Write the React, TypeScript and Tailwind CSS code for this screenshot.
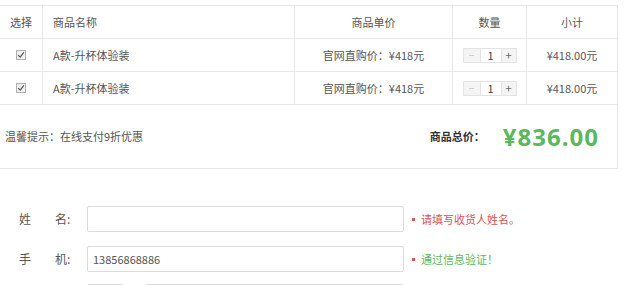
import React from "react";

const font = { fontFamily: '"Noto Sans CJK SC", "Noto Sans", sans-serif' };

const items = [
  { name: "A款-升杯体验装", price: "官网直购价：¥418元", qty: 1, subtotal: "¥418.00元" },
  { name: "A款-升杯体验装", price: "官网直购价：¥418元", qty: 1, subtotal: "¥418.00元" },
];

const cols = "grid grid-cols-[43px_252px_158px_74px_90px]";

function Check() {
  return (
    <span className="w-[10px] h-[10px] border border-[#b0b0b0] bg-[#f0f0f0] flex items-center justify-center">
      <svg width="8" height="8" viewBox="0 0 8 8">
        <path d="M1.2 4.2 L3.2 6.2 L6.8 1.4" fill="none" stroke="#555" strokeWidth="1.2" />
      </svg>
    </span>
  );
}

function Stepper({ qty }: { qty: number }) {
  return (
    <div className="flex h-[15px] border border-[#e3e3e3] text-[11px] leading-none">
      <span className="w-[17px] bg-[#f4f4f4] text-[#c5c5c5] flex items-center justify-center border-r border-[#e3e3e3]">−</span>
      <span className="w-[20px] bg-white text-[#444] flex items-center justify-center">{qty}</span>
      <span className="w-[15px] bg-[#f4f4f4] text-[#666] flex items-center justify-center border-l border-[#e3e3e3]">+</span>
    </div>
  );
}

function Field({ label, value, msg, ok }: { label: [string, string]; value?: string; msg: string; ok?: boolean }) {
  return (
    <div className="flex items-center h-[26px]">
      <div className="w-[87px] flex pl-[19px] text-[12px] text-[#555]">
        <span className="w-[36px]">{label[0]}</span>
        <span>{label[1]}:</span>
      </div>
      <div className="w-[317px] h-[26px] border border-[#dcdcdc] rounded-[2px] px-[5px] flex items-center text-[11px] text-[#555]">
        {value}
      </div>
      <div className={`ml-[8px] flex items-center text-[11px] ${ok ? "text-[#5cb85c]" : "text-[#d9534f]"}`}>
        <span className="w-[3px] h-[3px] bg-[#d9534f] mr-[6px]" />
        {msg}
      </div>
    </div>
  );
}

export default function App() {
  return (
    <div className="w-[631px] h-[285px] overflow-hidden bg-white" style={font}>
      <div className="pt-[5px] w-[618px] text-[11px] text-[#555]">
        <div className="border-t border-r border-[#e8e8e8]">
          <div className={`${cols} h-[33px] border-b border-[#e8e8e8]`}>
            <div className="flex items-center justify-center border-r border-[#e8e8e8]">选择</div>
            <div className="flex items-center pl-[10px] border-r border-[#e8e8e8]">商品名称</div>
            <div className="flex items-center justify-center border-r border-[#e8e8e8]">商品单价</div>
            <div className="flex items-center justify-center border-r border-[#e8e8e8]">数量</div>
            <div className="flex items-center justify-center">小计</div>
          </div>
          {items.map((it, i) => (
            <div key={i} className={`${cols} h-[33px] border-b border-[#e8e8e8]`}>
              <div className="flex items-center justify-center border-r border-[#e8e8e8]">
                <Check />
              </div>
              <div className="flex items-center pl-[10px] border-r border-[#e8e8e8]">{it.name}</div>
              <div className="flex items-center justify-center border-r border-[#e8e8e8]">{it.price}</div>
              <div className="flex items-center justify-center border-r border-[#e8e8e8]">
                <Stepper qty={it.qty} />
              </div>
              <div className="flex items-center justify-center">{it.subtotal}</div>
            </div>
          ))}
          <div className="h-[64px] border-b border-[#e8e8e8] flex items-center justify-between pl-[5px] pr-[18px]">
            <span>温馨提示：在线支付9折优惠</span>
            <div className="flex items-center">
              <span className="font-bold text-[#333] mr-[18px]">商品总价：</span>
              <span
                className="text-[24px] font-bold text-[#5cb85c] tracking-[1px] leading-none"
                style={{ fontFamily: '"Open Sans", "Noto Sans", sans-serif' }}
              >
                ¥836.00
              </span>
            </div>
          </div>
        </div>
      </div>
      <div className="mt-[37px] flex flex-col gap-[14px]">
        <Field label={["姓", "名"]} msg="请填写收货人姓名。" />
        <Field label={["手", "机"]} value="13856868886" msg="通过信息验证！" ok />
        <div className="-mt-[2px] flex items-center h-[26px]">
          <div className="w-[87px]" />
          <div className="w-[37px] h-[26px] border border-[#dcdcdc] rounded-[2px]" />
          <div className="ml-[21px] w-[259px] h-[26px] border border-[#dcdcdc] rounded-[2px]" />
        </div>
      </div>
    </div>
  );
}
